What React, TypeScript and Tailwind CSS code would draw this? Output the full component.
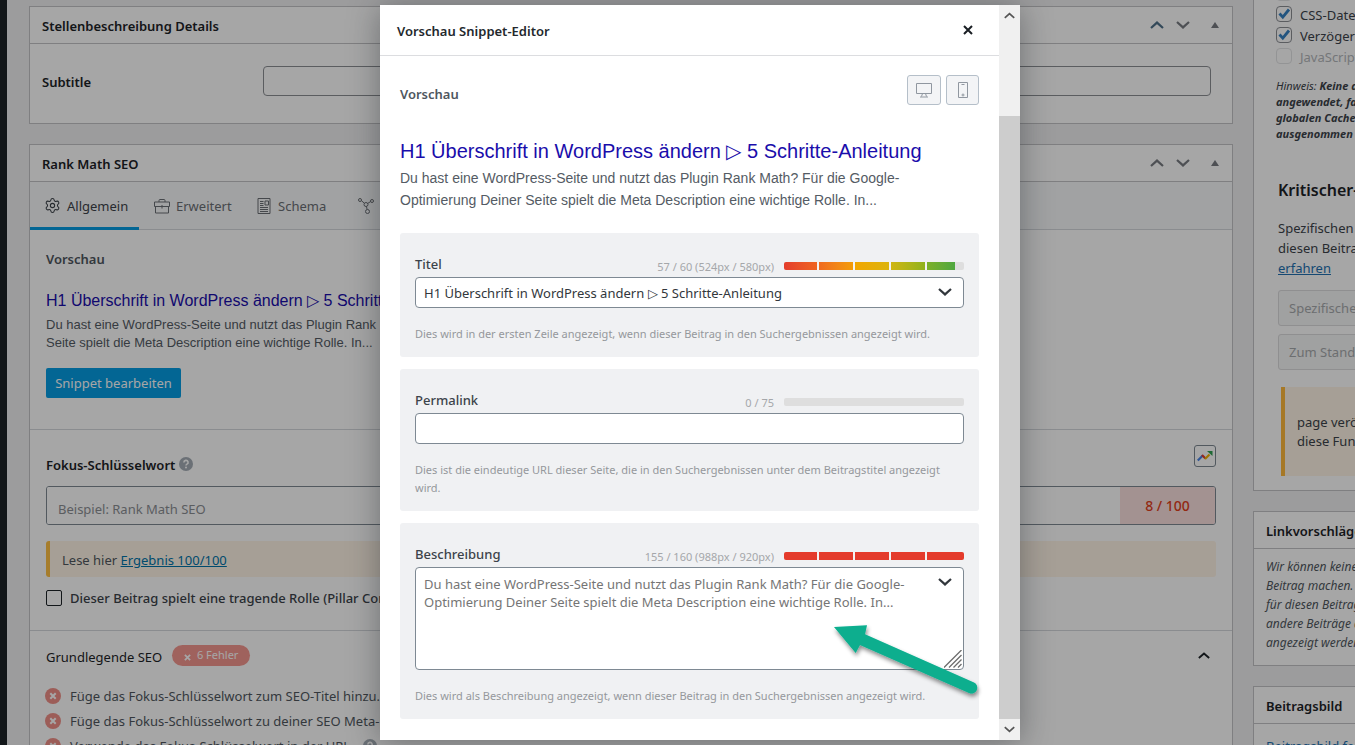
import React from "react";
import { Settings } from "lucide-react";

function Chevron({ up = false, className = "" }: { up?: boolean; className?: string }) {
  return (
    <svg viewBox="0 0 14 8" className={className} fill="none" stroke="currentColor" strokeWidth="2.2" aria-hidden="true">
      <path d={up ? "M1 7l6-5.4L13 7" : "M1 1l6 5.4L13 1"} />
    </svg>
  );
}

function BoxHeader({ title, controls = true, blueUp = false }: { title: string; controls?: boolean; blueUp?: boolean }) {
  return (
    <div className="flex h-[37px] items-center justify-between border-b border-[#c3c4c7] px-3">
      <h2 className="pt-[3px] text-[13px] font-semibold text-[#1d2327]">{title}</h2>
      {controls && (
        <div className="flex items-center text-[#787c82]">
          <button aria-label="Nach oben" className="flex w-[26px] justify-center">
            <Chevron up className={blueUp ? "h-2 w-3.5 text-[#4f7089]" : "h-2 w-3.5"} />
          </button>
          <button aria-label="Nach unten" className="flex w-[26px] justify-center">
            <Chevron className="h-2 w-3.5" />
          </button>
          <button aria-label="Umschalten" className="ml-[14px] flex w-[10px] justify-center">
            <svg viewBox="0 0 8 6" className="h-1.5 w-2" fill="currentColor" aria-hidden="true">
              <path d="M4 0l4 6H0z" />
            </svg>
          </button>
        </div>
      )}
    </div>
  );
}

function TabIcon({ name }: { name: string }) {
  if (name === "gear") return <Settings size={17} strokeWidth={1.5} aria-hidden="true" />;
  return (
    <svg viewBox="0 0 16 16" className="h-4 w-4 shrink-0" fill="none" stroke="currentColor" strokeWidth="1" aria-hidden="true">
      {name === "case" && (
        <>
          <path d="M.5 4h15v4.5H.5zM1.5 8.500v6.500h13V8.500M5 4V2.500q0-1 1-1h4q1 0 1 1V4" />
          <path d="M8 7v3.500" />
        </>
      )}
      {name === "news" && (
        <>
          <path d="M2 .5h12v15H2z" />
          <path d="M4 3.500h3.500M4 5.500h3.500M4 7.500h3.500M4 9.500h8M4 11.500h8M4 13.500h8M9 3h3.500v4H9z" />
        </>
      )}
      {name === "nodes" && (
        <>
          <circle cx="2" cy="2" r="1.500" />
          <circle cx="14" cy="3" r="1.500" />
          <circle cx="9.500" cy="13.500" r="2" />
          <circle cx="8" cy="6.500" r="2" />
          <path d="M3.400 2.700l3 2.500M12.600 3.600l-2.900 1.800M8.500 8.500l.6 3" />
        </>
      )}
    </svg>
  );
}

function HelpDot() {
  return (
    <svg viewBox="0 0 14 14" className="h-3.5 w-3.5 shrink-0" aria-label="Hilfe" role="img">
      <circle cx="7" cy="7" r="7" fill="#a5adb6" />
      <path d="M4.900 5.400a2.100 2 0 1 1 3.100 1.700q-1 .6-1 1.300" fill="none" stroke="#fff" strokeWidth="1.600" />
      <circle cx="7" cy="10.600" r="1" fill="#fff" />
    </svg>
  );
}

function ErrorDot() {
  return (
    <svg viewBox="0 0 16 16" className="h-4 w-4 shrink-0" aria-hidden="true">
      <circle cx="8" cy="8" r="8" fill="#f09088" />
      <path d="M5.300 5.300l5.400 5.400M10.700 5.300l-5.400 5.400" stroke="#fff" strokeWidth="2" />
    </svg>
  );
}

const tabs = [
  { icon: "gear", label: "Allgemein", active: true },
  { icon: "case", label: "Erweitert", active: false },
  { icon: "news", label: "Schema", active: false },
  { icon: "nodes", label: "Social", active: false },
];

const failures = [
  { text: "Füge das Fokus-Schlüsselwort zum SEO-Titel hinzu.", help: false },
  { text: "Füge das Fokus-Schlüsselwort zu deiner SEO Meta-Beschreibung hinzu.", help: false },
  { text: "Verwende das Fokus-Schlüsselwort in der URL.", help: true },
];

function SubtitleBox() {
  return (
    <section className="border border-[#c3c4c7] bg-white">
      <BoxHeader title="Stellenbeschreibung Details" blueUp />
      <div className="flex items-center pb-[27px] pl-3 pr-[21px] pt-[22px]">
        <label htmlFor="subtitle" className="w-[221px] shrink-0 pt-1 text-[13px] font-semibold text-[#1d2327]">Subtitle</label>
        <input id="subtitle" className="h-[30px] min-w-0 flex-1 rounded border border-[#8c8f94] bg-white px-2" />
      </div>
    </section>
  );
}

function SeoBox() {
  return (
    <section className="mt-5 border border-[#c3c4c7] bg-white pb-40">
      <BoxHeader title="Rank Math SEO" />
      <nav className="flex h-12 border-b border-[#d5d7dc] bg-[#f8f9fa] text-[13px] text-[#6b6f75]">
        {tabs.map((t) => (
          <button
            key={t.label}
            className={
              t.active
                ? "-mb-px flex h-12 w-[109px] items-center gap-[6px] border-b-[3px] border-[#069de3] pl-[14px] pt-[2px] text-[#3c434a]"
                : "flex w-[102px] items-center gap-[6px] pl-[15px]"
            }
          >
            <TabIcon name={t.icon} />
            <span className="pt-[2px]">{t.label}</span>
          </button>
        ))}
      </nav>
      <div className="h-[200px] border-b border-[#d5d7dc] px-4 pt-5">
        <h3 className="text-[13px] font-semibold leading-[18px] text-[#4f565e]">Vorschau</h3>
        <p className="mt-5 whitespace-nowrap font-['Liberation_Sans',Arial,sans-serif] text-[16px] leading-[26px] text-[#1a0dab]">
          H1 Überschrift in WordPress ändern ▷ 5 Schritte-Anleitung
        </p>
        <p className="mt-[2px] whitespace-nowrap font-['Liberation_Sans',Arial,sans-serif] text-[13px] leading-[18px] text-[#545b64]">
          Du hast eine WordPress-Seite und nutzt das Plugin Rank
          <br />
          Seite spielt die Meta Description eine wichtige Rolle. In...
        </p>
        <button className="mt-4 h-[30px] w-[135px] rounded-xs bg-[#069de3] pt-[2px] text-[13px] text-white">Snippet bearbeiten</button>
      </div>
      <div className="border-b border-[#d5d7dc] px-4 pb-6 pt-[15px]">
        <div className="flex h-[30px] items-start">
          <label htmlFor="focus" className="mt-[10px] text-[13px] font-semibold leading-5 text-[#1d2327]">Fokus-Schlüsselwort</label>
          <span className="ml-1 mt-3"><HelpDot /></span>
          <button aria-label="Trends" className="ml-auto flex h-[22px] w-[22px] items-center justify-center rounded-[3px] border border-[#7e8993] bg-white">
            <svg viewBox="0 0 16 12" className="h-3 w-4 shrink-0" fill="none" strokeWidth="2.200" aria-hidden="true">
              <path d="M.8 10.500l5-5" stroke="#4a86e8" />
              <path d="M5 5l3.500 3.500" stroke="#e03c31" />
              <path d="M8 9l4.500-4.500" stroke="#f5b400" />
              <path d="M10 1H15.500v5z" fill="#30a252" />
            </svg>
          </button>
        </div>
        <div className="mt-[11px] flex h-[39px] overflow-hidden rounded-[3px] border border-[#7e8993]">
          <input id="focus" placeholder="Beispiel: Rank Math SEO" className="min-w-0 flex-1 bg-white px-[11px] pt-2 text-[13px] placeholder:text-[#8c8f94]" />
          <span className="flex w-[95px] items-center justify-center bg-[#fbe0df] text-[14px] font-medium text-[#e2401c]">8 / 100</span>
        </div>
        <p className="mt-4 flex h-9 items-center rounded-[3px] border-l-4 border-[#ffc044] bg-[#fff5e6] pl-3 pt-1 text-[13px] text-[#50575e]">
          Lese hier&nbsp;<a href="#ergebnis" className="text-[#0073aa] underline">Ergebnis 100/100</a>
        </p>
        <label className="mt-[13px] flex h-4 items-center gap-2 whitespace-nowrap text-[13px] font-medium text-[#3c434a]">
          <input type="checkbox" className="h-4 w-4 shrink-0 appearance-none rounded-[2px] border border-[#1d2327] bg-white" />
          <span className="pt-[2px]">Dieser Beitrag spielt eine tragende Rolle (Pillar Content)</span>
        </label>
      </div>
      <div className="px-4 pt-[14px]">
        <div className="flex h-6 items-start">
          <h3 className="text-[13px] leading-6 text-[#1d2327]">Grundlegende SEO</h3>
          <span className="ml-[10px] flex h-[21px] w-[78px] items-center justify-center gap-[6px] rounded-full bg-[#f5978f] text-[11px] text-white">
            <svg viewBox="0 0 8 8" className="mt-1 h-[7px] w-[7px]" stroke="currentColor" strokeWidth="2" aria-hidden="true">
              <path d="M1 1l6 6M7 1L1 7" />
            </svg>
            6 Fehler
          </span>
          <button aria-label="Einklappen" className="ml-auto mr-[6px] mt-[7px]"><Chevron up className="h-[7px] w-3 text-[#1d2327]" /></button>
        </div>
        <ul className="-ml-px mt-[14px] text-[13px] text-[#50575e]">
          {failures.map((f) => (
            <li key={f.text} className="flex h-[25px] items-center gap-[9px] whitespace-nowrap">
              <ErrorDot />
              <span className="pt-[2px]">{f.text}</span>
              {f.help && <HelpDot />}
            </li>
          ))}
        </ul>
      </div>
    </section>
  );
}

function CheckRow({ label, checked, muted = false }: { label: string; checked: boolean; muted?: boolean }) {
  return (
    <label className={muted ? "flex h-[21px] items-center gap-2 text-[13px] text-[#b4b7bb]" : "flex h-[21px] items-center gap-2 text-[13px] text-[#3c434a]"}>
      <span className="relative flex">
        <input
          type="checkbox"
          defaultChecked={checked}
          disabled={muted}
          className={muted ? "h-4 w-4 appearance-none rounded border border-[#e2e3e5]" : "h-4 w-4 appearance-none rounded border border-[#8c8f94] bg-white"}
        />
        {checked && (
          <svg viewBox="0 0 16 16" className="pointer-events-none absolute inset-0 h-4 w-4" fill="none" stroke="#3582c4" strokeWidth="2.800" aria-hidden="true">
            <path d="M3.500 7.500l3.300 3.700L13 3.500" />
          </svg>
        )}
      </span>
      <span className="pt-[4px]">{label}</span>
    </label>
  );
}

function Sidebar() {
  return (
    <aside className="w-[280px] shrink-0">
      <section className="h-[491px] overflow-hidden border border-t-0 border-[#c3c4c7] bg-white">
        <div className="-mt-[18px] whitespace-nowrap pl-[22px]">
          <CheckRow label="CDN" checked={false} muted />
          <CheckRow label="CSS-Dateien optimieren" checked />
          <CheckRow label="Verzögerte JavaScripts" checked />
          <CheckRow label="JavaScript verzögern" checked={false} muted />
          <p className="mt-[12px] text-[11px] font-bold italic leading-4 text-[#3c434a]">
            <span className="font-normal">Hinweis:</span> Keine dieser Optionen wird
            <br />
            angewendet, falls diese in den
            <br />
            globalen Cache-Einstellungen
            <br />
            ausgenommen wurden.
          </p>
        </div>
        <div className="whitespace-nowrap pl-6 text-[13px] leading-5 text-[#3c434a]">
          <h2 className="mt-9 text-[16px] font-semibold leading-6 text-[#1d2327]">Kritischer-Pfad-CSS</h2>
          <p className="mt-4">
            Spezifischen Kritischer-Pfad für
            <br />
            diesen Beitrag erstellen. Mehr
            <br />
            <a href="#mehr" className="text-[#2271b1] underline">erfahren</a>
          </p>
          <button disabled className="mt-3 block h-9 w-[232px] rounded-[3px] border border-[#dcdcde] bg-[#f6f7f7] px-[10px] text-left text-[#a7aaad]">Spezifisches CPCSS generieren</button>
          <button disabled className="mt-2 block h-9 w-[232px] rounded-[3px] border border-[#dcdcde] bg-[#f6f7f7] px-[10px] text-left text-[#a7aaad]">Zum Standard zurückkehren</button>
          <p className="ml-[3px] mt-[17px] h-[89px] border-l-4 border-[#ffb83b] bg-[#fff5e6] pl-3 pt-[26px] leading-[19px]">
            page veröffentlichen, um
            <br />
            diese Funktion zu nutzen.
          </p>
        </div>
      </section>
      <section className="mt-5 h-[155px] overflow-hidden whitespace-nowrap border border-[#c3c4c7] bg-white">
        <BoxHeader title="Linkvorschläge" controls={false} />
        <p className="pl-3 pt-2 text-[12px] italic leading-[19px] text-[#50575e]">
          Wir können keine Linkvorschläge
          <br />
          Beitrag machen. Bitte wähle
          <br />
          für diesen Beitrag oder
          <br />
          andere Beiträge aus, die
          <br />
          angezeigt werden sollen.
        </p>
      </section>
      <section className="mt-5 whitespace-nowrap border border-[#c3c4c7] bg-white pb-10">
        <BoxHeader title="Beitragsbild" controls={false} />
        <a href="#bild" className="block pl-3 pt-[14px] text-[13px] leading-4 text-[#2271b1] underline">Beitragsbild festlegen</a>
      </section>
    </aside>
  );
}

const rainbow = [
  "bg-linear-to-r from-[#e43d2c] to-[#ef6420]",
  "bg-linear-to-r from-[#f06a1e] to-[#f39c06]",
  "bg-linear-to-r from-[#f2a600] to-[#dcb40e]",
  "bg-linear-to-r from-[#d0b610] to-[#8fb21c]",
  "bg-linear-to-r from-[#7cb029] to-[#3aa443]",
];
const solidRed = Array(5).fill("bg-[#e43b2b]") as string[];

function Meter({ text, percent, parts }: { text: string; percent: number; parts: string[] }) {
  return (
    <div className="flex items-center gap-[10px] pt-[5px] text-[11px] leading-[18px] text-[#a5a7aa]">
      <span>{text}</span>
      <div className="-mt-[2px] h-2 w-[180px] overflow-hidden rounded-[2px] bg-[#dedede]">
        <div className="h-2 overflow-hidden" style={{ width: `${percent}%` }}>
          <div className="grid h-2 w-[180px] grid-cols-[33px_34px_34px_34px_37px] gap-[2px] bg-[#f3f3f3]">
            {parts.map((c, i) => (
              <span key={i} className={c} />
            ))}
          </div>
        </div>
      </div>
    </div>
  );
}

function Panel({ id, label, help, meter, children }: { id: string; label: string; help: string; meter: React.ReactNode; children: React.ReactNode }) {
  return (
    <div className="relative rounded-[3px] bg-[#f0f1f3] px-[15px] pb-[14px] pt-[18px]">
      <div className="flex h-[26px] items-center justify-between">
        <label htmlFor={id} className="text-[13px] font-medium leading-[18px] text-[#3c434a]">{label}</label>
        {meter}
      </div>
      {children}
      <p className="mt-[17px] text-[11px] leading-[18px] text-[#95989c]">{help}</p>
    </div>
  );
}

const fieldBase = "block w-full rounded border border-[#7e8993] bg-white px-2";

function PointerArrow() {
  return (
    <svg viewBox="0 0 150 80" className="pointer-events-none absolute -right-[5px] bottom-[19px] h-20 w-[150px] overflow-visible" aria-hidden="true">
      <defs>
        <filter id="arrow-shadow" x="-10%" y="-10%" width="120%" height="130%">
          <feDropShadow dx="1" dy="3" stdDeviation="2" floodColor="#000" floodOpacity="0.45" />
        </filter>
      </defs>
      <path
        d="M0 7L33 5.300L31 14.300L140 62.500A5 5 0 0 1 135 73L26 25L21.700 33z"
        fill="#08ae8e"
        filter="url(#arrow-shadow)"
      />
    </svg>
  );
}

function SnippetModal() {
  return (
    <div role="dialog" aria-label="Vorschau Snippet-Editor" className="flex h-[calc(100vh-10px)] w-[640px] bg-white shadow-[0_3px_30px_rgba(25,30,35,0.4)]">
      <div className="min-w-0 flex-1 overflow-hidden">
        <header className="flex h-[51px] items-center justify-between border-b border-[#dcdde0] pl-[17px] pr-[26px]">
          <h1 className="pt-[3px] text-[13px] font-semibold text-[#23282d]">Vorschau Snippet-Editor</h1>
          <button aria-label="Schließen" className="text-[#191e23]">
            <svg viewBox="0 0 10 10" className="h-[10px] w-[10px]" stroke="currentColor" strokeWidth="2" aria-hidden="true">
              <path d="M1 1l8 8M9 1L1 9" />
            </svg>
          </button>
        </header>
        <div className="px-5 pt-[19px]">
          <div className="flex h-[30px] items-center gap-[5px]">
            <h2 className="mr-auto pt-[10px] text-[13px] font-semibold text-[#4f565e]">Vorschau</h2>
            <button aria-label="Desktop" className="flex h-[30px] w-[34px] items-center justify-center rounded-[3px] border border-[#b5bfc9] bg-[#f3f4f6] text-[#9097a0]">
              <svg viewBox="0 0 16 16" className="h-4 w-4" fill="none" stroke="currentColor" aria-hidden="true">
                <path d="M.5 1.500h15v10H.5zM6.500 11.500l-1 3M9.500 11.500l1 3M4 15h8" />
              </svg>
            </button>
            <button aria-label="Mobil" className="flex h-[30px] w-[33px] items-center justify-center rounded-[3px] border border-[#b5bfc9] bg-[#f3f4f6] text-[#9097a0]">
              <svg viewBox="0 0 16 16" className="h-4 w-4" fill="none" stroke="currentColor" aria-hidden="true">
                <path d="M3.500.5h9v15h-9zM6.500 2.500h3" />
                <circle cx="8" cy="13" r="1" />
              </svg>
            </button>
          </div>
          <p className="mt-[33px] font-['Liberation_Sans',Arial,sans-serif] text-[20px] leading-[26px] text-[#1a0dab]">
            H1 Überschrift in WordPress ändern ▷ 5 Schritte-Anleitung
          </p>
          <p className="mt-[3px] font-['Liberation_Sans',Arial,sans-serif] text-[14px] leading-[22px] text-[#545b64]">
            Du hast eine WordPress-Seite und nutzt das Plugin Rank Math? Für die Google-
            <br />
            Optimierung Deiner Seite spielt die Meta Description eine wichtige Rolle. In...
          </p>
          <div className="mt-[22px] flex flex-col gap-3">
            <Panel
              id="titel"
              label="Titel"
              help="Dies wird in der ersten Zeile angezeigt, wenn dieser Beitrag in den Suchergebnissen angezeigt wird."
              meter={<Meter text="57 / 60 (524px / 580px)" percent={95} parts={rainbow} />}
            >
              <div className="relative">
                <input id="titel" defaultValue="H1 Überschrift in WordPress ändern ▷ 5 Schritte-Anleitung" className={`${fieldBase} h-[31px] text-[13px] text-[#32373c]`} />
                <button aria-label="Variablen für Titel" className="absolute right-3 top-[11px] text-[#32373c]"><Chevron className="h-2 w-3.5" /></button>
              </div>
            </Panel>
            <Panel
              id="permalink"
              label="Permalink"
              help="Dies ist die eindeutige URL dieser Seite, die in den Suchergebnissen unter dem Beitragstitel angezeigt wird."
              meter={<Meter text="0 / 75" percent={0} parts={rainbow} />}
            >
              <input id="permalink" className={`${fieldBase} h-[31px] text-[13px]`} />
            </Panel>
            <Panel
              id="beschreibung"
              label="Beschreibung"
              help="Dies wird als Beschreibung angezeigt, wenn dieser Beitrag in den Suchergebnissen angezeigt wird."
              meter={<Meter text="155 / 160 (988px / 920px)" percent={100} parts={solidRed} />}
            >
              <div className="relative">
                <textarea
                  id="beschreibung"
                  placeholder={"Du hast eine WordPress-Seite und nutzt das Plugin Rank Math? Für die Google-\nOptimierung Deiner Seite spielt die Meta Description eine wichtige Rolle. In..."}
                  className={`${fieldBase} h-[103px] resize-none pt-[7px] text-[13px] leading-[18px] placeholder:text-[#757575]`}
                />
                <button aria-label="Variablen für Beschreibung" className="absolute right-3 top-[11px] text-[#32373c]"><Chevron className="h-2 w-3.5" /></button>
                <svg viewBox="0 0 18 18" className="pointer-events-none absolute bottom-[2px] right-[2px] h-[18px] w-[18px]" stroke="#6d6d6d" strokeWidth="1.300" aria-hidden="true">
                  <path d="M0 17.500L17.500 0M5 17.500L17.500 5M9.500 17.500l8-8M14 17.500l3.500-3.500" />
                </svg>
              </div>
              <PointerArrow />
            </Panel>
          </div>
        </div>
      </div>
      <div className="flex w-[21px] shrink-0 flex-col bg-[#f0f0f0] text-[#555]" aria-hidden="true">
        <div className="flex h-[21px] items-center justify-center"><Chevron up className="h-[7px] w-[11px]" /></div>
        <div className="mt-[90px] flex-1 bg-[#cdcdcd]" />
        <div className="flex h-[21px] items-center justify-center"><Chevron className="h-[7px] w-[11px]" /></div>
      </div>
    </div>
  );
}

export default function App() {
  return (
    <div className="relative h-screen overflow-hidden bg-[#f0f0f1] font-['Noto_Sans',sans-serif]">
      <div className="-mr-[178px] flex">
        <div className="h-screen w-[7px] shrink-0 bg-[#1d2327]" />
        <div className="flex min-w-0 flex-1 gap-5 pl-[22px]">
          <main className="min-w-0 flex-1 pt-[6px]">
            <SubtitleBox />
            <SeoBox />
          </main>
          <Sidebar />
        </div>
      </div>
      <div className="absolute inset-y-0 -right-[45px] left-0 flex items-center justify-center bg-black/35">
        <SnippetModal />
      </div>
    </div>
  );
}
